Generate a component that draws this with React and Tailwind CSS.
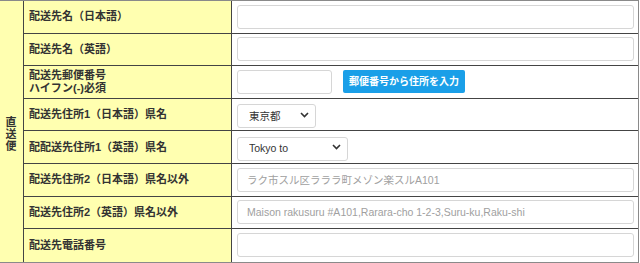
import { useState } from "react";

const jp = { fontFamily: '"Helvetica Neue", "Liberation Sans", "Noto Sans CJK JP", sans-serif' };

function Chevron() {
  return (
    <svg width="9" height="6" viewBox="0 0 9 6" className="pointer-events-none absolute right-[7px] top-1/2 -translate-y-1/2">
      <path d="M1 1 L4.5 4.5 L8 1" fill="none" stroke="#333" strokeWidth="1.6" />
    </svg>
  );
}

function TextBox({ placeholder, w = "w-full" }) {
  return (
    <input
      type="text"
      placeholder={placeholder}
      className={`${w} h-[24px] rounded-[3px] border border-[#d6d6d6] bg-white px-[9px] text-[10.5px] text-[#333] placeholder:text-[#a0a0a0] outline-none`}
      style={jp}
    />
  );
}

function Pick({ value, options, w }) {
  const [v, setV] = useState(value);
  return (
    <div className={`relative ${w} h-[24px]`}>
      <select
        value={v}
        onChange={(e) => setV(e.target.value)}
        className="h-full w-full appearance-none rounded-[3px] border border-[#d6d6d6] bg-white pl-[11px] text-[10.5px] text-[#333] outline-none"
        style={jp}
      >
        {options.map((o) => (
          <option key={o}>{o}</option>
        ))}
      </select>
      <Chevron />
    </div>
  );
}

const rows = [
  { label: ["配送先名（日本語）"], field: <TextBox /> },
  { label: ["配送先名（英語）"], field: <TextBox /> },
  {
    label: ["配送先郵便番号", "ハイフン(-)必須"],
    field: (
      <div className="flex items-center gap-[11px]">
        <TextBox w="w-[95px]" />
        <button
          className="h-[23px] w-[122px] rounded-[2px] bg-[#1a9fe8] text-[10px] font-bold text-white"
          style={jp}
        >
          郵便番号から住所を入力
        </button>
      </div>
    ),
  },
  {
    label: ["配送先住所1（日本語）県名"],
    field: <Pick value="東京都" options={["東京都", "大阪府", "北海道"]} w="w-[79px]" />,
  },
  {
    label: ["配配送先住所1（英語）県名"],
    field: <Pick value="Tokyo to" options={["Tokyo to", "Osaka fu", "Hokkaido"]} w="w-[111px]" />,
  },
  { label: ["配送先住所2（日本語）県名以外"], field: <TextBox placeholder="ラク市スル区ラララ町メゾン楽スルA101" /> },
  {
    label: ["配送先住所2（英語）県名以外"],
    field: <TextBox placeholder="Maison rakusuru #A101,Rarara-cho 1-2-3,Suru-ku,Raku-shi" />,
  },
  { label: ["配送先電話番号"], field: <TextBox /> },
];

export default function App() {
  return (
    <div className="h-[263px] w-[640px] overflow-hidden bg-white" style={jp}>
      <div className="flex w-[639px] border-y border-r border-[#8a8a8a]">
        {/* 直送便 */}
        <div className="flex w-[24px] shrink-0 flex-col items-center justify-center border-r border-[#444] bg-[#ffffb0] pr-[1px] pt-[6px] text-[11px] font-bold leading-[12px] text-[#333]">
          <span>直</span>
          <span>送</span>
          <span>便</span>
        </div>
        <div className="flex flex-1 flex-col">
          {rows.map((r, i) => (
            <div
              key={i}
              className={`flex h-[32.6px] ${i < rows.length - 1 ? "border-b border-[#444]" : ""}`}
            >
              <div className="flex w-[208px] shrink-0 flex-col justify-center border-r border-[#444] bg-[#ffffb0] pl-[5px] text-[11px] font-bold leading-[13px] text-[#333]">
                {r.label.map((t) => (
                  <span key={t}>{t}</span>
                ))}
              </div>
              <div className="flex flex-1 items-center pl-[5px] pr-[4px]">{r.field}</div>
            </div>
          ))}
        </div>
      </div>
    </div>
  );
}
